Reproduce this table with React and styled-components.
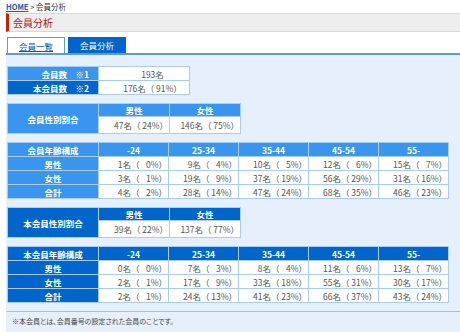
import styled, { createGlobalStyle } from 'styled-components';

const GlobalStyle = createGlobalStyle`
  html, body { margin: 0; padding: 0; background: #fff; }
  body {
    font-family: "Noto Sans CJK JP", "Noto Sans", sans-serif;
    font-size: 8.5px;
    color: #555;
  }
`;

const Page = styled.div`
  width: 460px;
  height: 332px;
  overflow: hidden;
  padding: 2px 0 0 6px;
  box-sizing: border-box;
  display: flex;
  flex-direction: column;
`;

const Breadcrumb = styled.div`
  font-size: 7.5px;
  line-height: 10px;
  height: 10px;
  color: #333;
  white-space: pre;

  a {
    color: #2255bb;
    font-weight: bold;
    text-decoration: underline;
  }
`;

const TitleBar = styled.h1`
  margin: 1px 0 0;
  height: 17px;
  line-height: 17px;
  background: #eeeeee;
  border-top: 1px solid #d8d8d8;
  border-bottom: 1px solid #d8d8d8;
  border-left: 3px solid #cc2200;
  padding-left: 4px;
  font-size: 10px;
  font-weight: normal;
  color: #aa1818;
`;

const Tabs = styled.div`
  display: flex;
  gap: 3px;
  margin-top: 5px;
  padding-left: 1px;
  border-bottom: 2px solid #5b9bd8;
`;

const Tab = styled.div`
  width: 58px;
  height: 16px;
  box-sizing: border-box;
  display: flex;
  align-items: center;
  justify-content: center;
  font-size: 8.5px;
  background: ${(p) => (p.$active ? '#0066cc' : '#fff')};
  color: ${(p) => (p.$active ? '#fff' : '#0055cc')};
  border: ${(p) => (p.$active ? 'none' : '1px solid #5b9bd8')};
  border-bottom: none;
  text-decoration: ${(p) => (p.$active ? 'none' : 'underline')};
`;

const Panel = styled.div`
  flex: 1;
  background: #e6f0fc;
  padding: 11px 0 0 1px;
`;

const Table = styled.table`
  border-collapse: collapse;
  table-layout: fixed;
  margin-bottom: 8px;
  border: 1px solid #a9cdf2;
`;

const Head = styled.th`
  border: 1px solid #a9cdf2;
  padding: 0 ${(p) => (p.$right ? '9px' : '0')} 0 0;
  height: ${(p) => p.$h || 13}px;
  background: ${(p) => (p.$dark ? '#0066cc' : '#3a95ee')};
  color: #fff;
  font-weight: bold;
  text-align: ${(p) => (p.$right ? 'right' : 'center')};
  white-space: pre;
`;

const Cell = styled.td`
  border: 1px solid #a9cdf2;
  height: ${(p) => p.$h || 13}px;
  padding: ${(p) => (p.$center ? '0 0 0 17px' : '0 1px 0 0')};
  background: #fff;
  color: #555;
  text-align: ${(p) => (p.$center ? 'center' : 'right')};
  white-space: pre;
`;

const Note = styled.div`
  border-top: 1px solid #bcbcbc;
  margin-left: -1px;
  padding: 4px 0 0 6px;
  font-size: 7px;
  color: #444;
  font-feature-settings: "palt";
`;

const ages = ['-24', '25-34', '35-44', '45-54', '55-'];

const ageAll = [
  ['男性', [[1, 0], [9, 4], [10, 5], [12, 6], [15, 7]]],
  ['女性', [[3, 1], [19, 9], [37, 19], [56, 29], [31, 16]]],
  ['合計', [[4, 2], [28, 14], [47, 24], [68, 35], [46, 23]]],
];

const ageMain = [
  ['男性', [[0, 0], [7, 3], [8, 4], [11, 6], [13, 7]]],
  ['女性', [[2, 1], [17, 9], [33, 18], [55, 31], [30, 17]]],
  ['合計', [[2, 1], [24, 13], [41, 23], [66, 37], [43, 24]]],
];

const fmt = ([n, p]) => `${n}名（\u2009${p < 10 ? '\u2007' : ''}${p}%）`;

const GenderTable = ({ title, dark, male, female }) => (
  <Table>
    <colgroup>
      <col style={{ width: 91 }} />
      <col style={{ width: 71 }} />
      <col style={{ width: 71 }} />
    </colgroup>
    <tbody>
      <tr>
        <Head rowSpan={2} $dark={dark}>{title}</Head>
        <Head $dark={dark} $h={11}>男性</Head>
        <Head $dark={dark} $h={11}>女性</Head>
      </tr>
      <tr>
        <Cell $h={16}>{fmt(male)}</Cell>
        <Cell $h={16}>{fmt(female)}</Cell>
      </tr>
    </tbody>
  </Table>
);

const AgeTable = ({ title, dark, rows }) => (
  <Table>
    <colgroup>
      <col style={{ width: 91 }} />
      {ages.map((a) => (
        <col key={a} style={{ width: 70 }} />
      ))}
    </colgroup>
    <tbody>
      <tr>
        <Head $dark={dark}>{title}</Head>
        {ages.map((a) => (
          <Head key={a} $dark={dark}>{a}</Head>
        ))}
      </tr>
      {rows.map(([label, vals]) => (
        <tr key={label}>
          <Head $dark={dark}>{label}</Head>
          {vals.map((v, i) => (
            <Cell key={i}>{fmt(v)}</Cell>
          ))}
        </tr>
      ))}
    </tbody>
  </Table>
);

export default function App() {
  return (
    <>
      <GlobalStyle />
      <Page>
        <Breadcrumb>
          <a>HOME</a>{' > 会員分析'}
        </Breadcrumb>
        <TitleBar>会員分析</TitleBar>
        <Tabs>
          <Tab>会員一覧</Tab>
          <Tab $active>会員分析</Tab>
        </Tabs>
        <Panel>
          <Table>
            <colgroup>
              <col style={{ width: 91 }} />
              <col style={{ width: 91 }} />
            </colgroup>
            <tbody>
              <tr>
                <Head $right>{'会員数　※1'}</Head>
                <Cell $center>193名</Cell>
              </tr>
              <tr>
                <Head $right $dark>{'本会員数　※2'}</Head>
                <Cell $center>{'176名（\u200991%）'}</Cell>
              </tr>
            </tbody>
          </Table>
          <GenderTable title="会員性別割合" male={[47, 24]} female={[146, 75]} />
          <AgeTable title="会員年齢構成" rows={ageAll} />
          <GenderTable title="本会員性別割合" dark male={[39, 22]} female={[137, 77]} />
          <AgeTable title="本会員年齢構成" dark rows={ageMain} />
          <Note>※本会員とは、会員番号の設定された会員のことです。</Note>
        </Panel>
      </Page>
    </>
  );
}
